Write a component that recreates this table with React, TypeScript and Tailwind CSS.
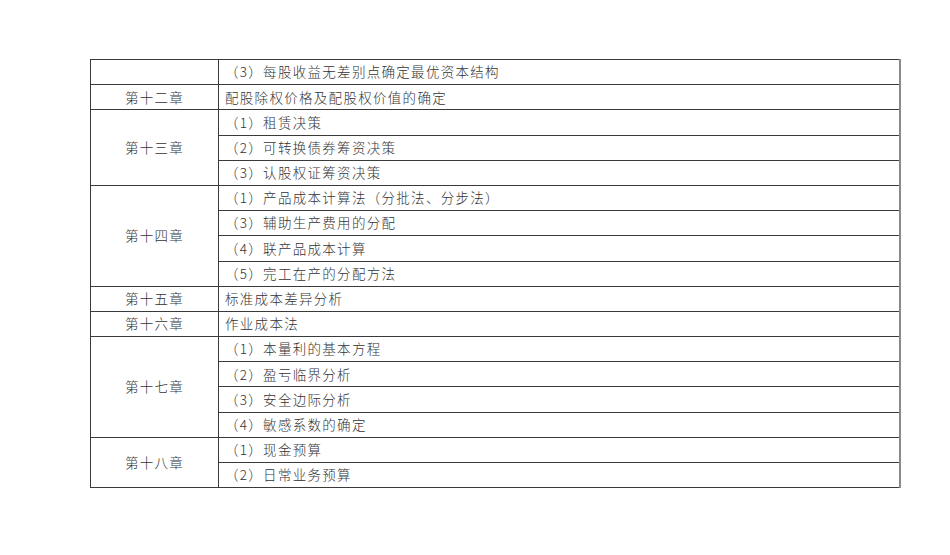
import React from "react";

type Group = { chapter: string; items: string[] };

const groups: Group[] = [
  { chapter: "", items: ["（3）每股收益无差别点确定最优资本结构"] },
  { chapter: "第十二章", items: ["配股除权价格及配股权价值的确定"] },
  { chapter: "第十三章", items: ["（1）租赁决策", "（2）可转换债券筹资决策", "（3）认股权证筹资决策"] },
  {
    chapter: "第十四章",
    items: ["（1）产品成本计算法（分批法、分步法）", "（3）辅助生产费用的分配", "（4）联产品成本计算", "（5）完工在产的分配方法"],
  },
  { chapter: "第十五章", items: ["标准成本差异分析"] },
  { chapter: "第十六章", items: ["作业成本法"] },
  {
    chapter: "第十七章",
    items: ["（1）本量利的基本方程", "（2）盈亏临界分析", "（3）安全边际分析", "（4）敏感系数的确定"],
  },
  { chapter: "第十八章", items: ["（1）现金预算", "（2）日常业务预算"] },
];

export default function App() {
  return (
    <div
      className="w-[950px] h-[555px] bg-white pt-[59px] pl-[90px]"
      style={{ fontFamily: '"Noto Sans CJK SC", "Liberation Serif", serif' }}
    >
      <table className="border-collapse w-[811px] table-fixed border-r-2 border-b border-r-[#8a8a8a] border-b-[#777] text-[#333] text-[13.5px] tracking-[1.3px] font-light">
        <colgroup>
          <col className="w-[128px]" />
          <col />
        </colgroup>
        <tbody>
          {groups.map((g, gi) =>
            g.items.map((it, ii) => (
              <tr key={`${gi}-${ii}`} className="h-[25.2px]">
                {ii === 0 && (
                  <td
                    rowSpan={g.items.length}
                    className="border border-[#3a3a3a] text-center align-middle p-0 leading-none"
                  >
                    {g.chapter}
                  </td>
                )}
                <td className="border border-[#3a3a3a] pl-[6px] p-0 leading-none align-middle whitespace-nowrap">
                  {it}
                </td>
              </tr>
            ))
          )}
        </tbody>
      </table>
    </div>
  );
}
